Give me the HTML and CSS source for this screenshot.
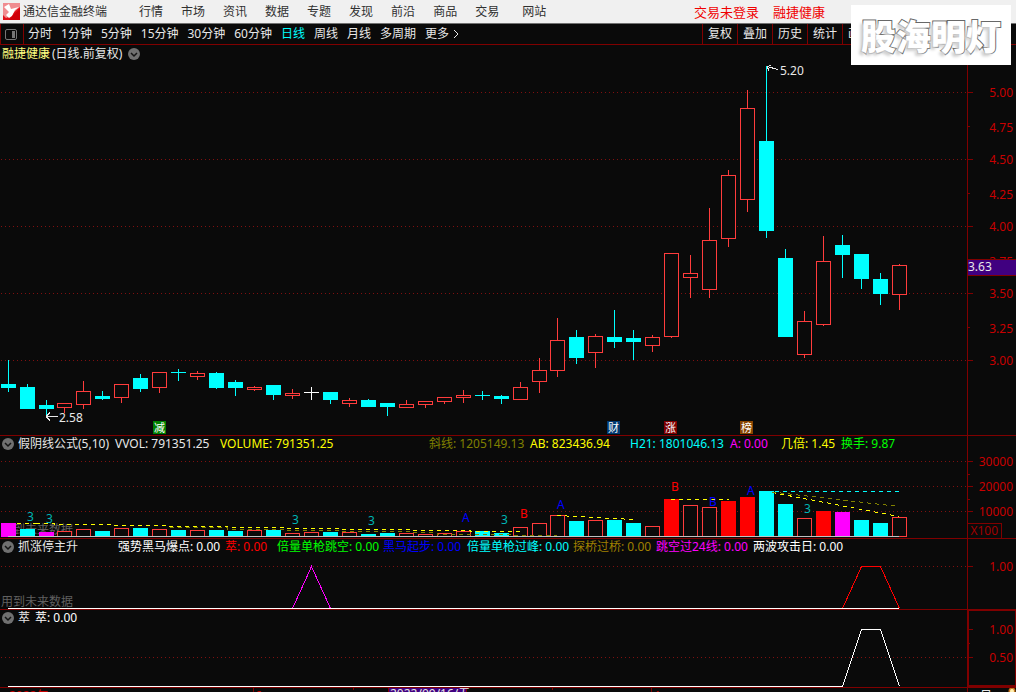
FILE: index.html
```
<!DOCTYPE html>
<html lang="zh-CN">
<head>
<meta charset="utf-8">
<title>通达信金融终端</title>
<link rel="stylesheet" href="styles.css">
</head>
<body>
<div class="app">
  <header class="topbar">
    <svg class="logo" width="17" height="17" viewBox="0 0 17 17" aria-hidden="true">
      <rect width="17" height="17" fill="#e01018"/>
      <path d="M0 0H17V4L11 9L8 13L3 15L0 12Z" fill="#f08c90"/>
      <path d="M1 4L6 1L8 6L16 4L12 7L9 13L6 15L3 12L6 9Z" fill="#fff"/>
      <path d="M11 11L17 6V17H6Z" fill="#d00008"/>
    </svg>
    <span class="brand">通达信金融终端</span>
    <nav class="menu">
      <a href="#">行情</a><a href="#">市场</a><a href="#">资讯</a><a href="#">数据</a><a href="#">专题</a><a href="#">发现</a><a href="#">前沿</a><a href="#">商品</a><a href="#">交易</a><a href="#" class="site">网站</a>
    </nav>
    <div class="account"><a href="#">交易未登录</a><a href="#">融捷健康</a></div>
  </header>

  <div class="toolbar">
    <button class="side-toggle" aria-label="侧栏">
      <svg width="13" height="11" viewBox="0 0 13 11"><rect x=".5" y=".5" width="11" height="10" rx="1.5" fill="none" stroke="#777"/><rect x="7" y="2" width="3" height="7" fill="#777"/></svg>
    </button>
    <div class="periods">
      <button>分时</button><button>1分钟</button><button>5分钟</button><button>15分钟</button><button>30分钟</button><button>60分钟</button><button class="active">日线</button><button>周线</button><button>月线</button><button>多周期</button><button class="more">更多<svg width="7" height="10" viewBox="0 0 7 10"><path d="M1 1L5 5L1 9" fill="none" stroke="#e8e8e8"/></svg></button>
    </div>
    <div class="tools"><button>复权</button><button>叠加</button><button>历史</button><button>统计</button><button>画线</button></div>
  </div>
  <div class="watermark">股海明灯</div>

  <section class="panel">
    <div class="plot">
      <div class="caption">
        <span class="stock">融捷健康</span><span>(日线.前复权)</span>
        <button class="fold" aria-label="菜单"><svg width="12" height="12" viewBox="0 0 12 12"><circle cx="6" cy="6" r="6" fill="#707070"/><path d="M3 5L6 8L9 5" fill="none" stroke="#141414" stroke-width="1.5"/></svg></button>
      </div>
      <svg class="chart" height="372"><g transform="translate(0,-63)">
        <g class="grid"><path d="M1 92.5H2000M1 159.5H2000M1 226.5H2000M1 293.5H2000M1 360.5H2000"/></g>
        <g id="candles"></g>
        <path class="pointer" d="M767 66.5L778 69.5M767 66.5L771 65.5M767 66.5L769 70.5M46 416.5H58M46 416.5L50 412.5M46 416.5L50 420.5"/>
        <text class="mark" x="780" y="75">5.20</text>
        <text class="mark" x="59" y="422">2.58</text>
        <g class="flags">
          <rect x="153" y="421" width="13" height="13" fill="#008000"/><text x="154" y="432">减</text>
          <rect x="607" y="421" width="13" height="13" fill="#003870"/><text x="608" y="432">财</text>
          <rect x="664" y="421" width="13" height="13" fill="#800000"/><text x="665" y="432">涨</text>
          <rect x="740" y="421" width="13" height="13" fill="#884400"/><text x="741" y="432">榜</text>
        </g>
      </g></svg>
    </div>
    <svg class="axis" height="390"><g transform="translate(0,-45)">
      <path class="tick" d="M0 92.5H5M0 126.5H2M0 159.5H5M0 193.5H2M0 226.5H5M0 260.5H2M0 293.5H5M0 327.5H2M0 360.5H5"/>
      <g class="scale"><text x="45" y="97">5.00</text><text x="45" y="132">4.75</text><text x="45" y="164">4.50</text><text x="45" y="199">4.25</text><text x="45" y="231">4.00</text><text x="45" y="266">3.75</text><text x="45" y="298">3.50</text><text x="45" y="333">3.25</text><text x="45" y="365">3.00</text></g>
      <rect x="0" y="259" width="100%" height="17" fill="#800000"/><rect x="0" y="260" width="100%" height="15" fill="#400080"/>
      <text class="mark" x="0" y="271">3.63</text>
    </g></svg>
  </section>

  <section class="panel ruled">
    <div class="plot">
      <div class="legend">
        <button class="fold" aria-label="菜单"><svg width="12" height="12" viewBox="0 0 12 12"><circle cx="6" cy="6" r="6" fill="#707070"/><path d="M3 5L6 8L9 5" fill="none" stroke="#141414" stroke-width="1.5"/></svg></button>
        <div class="values volume-values">
          <span>假阴线公式(5,10)</span><span>VVOL: 791351.25</span><span class="yellow">VOLUME: 791351.25</span><span class="olive">斜线: 1205149.13</span><span class="yellow">AB: 823436.94</span><span class="cyan">H21: 1801046.13</span><span class="magenta">A: 0.00</span><span class="yellow">几倍: 1.45</span><span class="lime">换手: 9.87</span>
        </div>
      </div>
      <svg class="chart" height="86"><g transform="translate(0,-452)">
        <g class="grid"><path d="M1 461.5H2000M1 486.5H2000M1 511.5H2000"/></g>
        <text class="notice" x="1" y="534">用到未来数据</text>
        <g id="volumes"></g>
        <g class="dash">
          <path stroke="#ffff00" d="M17 523.5H36M36 523.5H54V524.5H112V525.5H168V526.5H227V527.5H284V528.5H340V529.5H412V530.5H470V531.5H520M557 515.5L576 516.5L633 519.5M671 499.5H729M772 492.5L899 516.5"/>
          <path stroke="#808000" d="M170 527.5H227V529.5H284V530.5H340V531.5H412V532.5H437V534.5H512V535.5H557M772 492L899 506.5"/>
          <path stroke="#00ffff" d="M775 491.5H899"/>
        </g>
        <path stroke="#c0c0c0" d="M8 536.5H899"/>
        <g class="signals">
          <g fill="#00b4b4"><text x="27" y="521">3</text><text x="46" y="523">3</text><text x="292" y="524">3</text><text x="368" y="525">3</text><text x="501" y="524">3</text><text x="804" y="513">3</text></g>
          <g fill="#0000ff"><text x="462" y="522">A</text><text x="557" y="509">A</text><text x="709" y="506">B</text><text x="747" y="495">A</text></g>
          <g fill="#ff0000"><text x="520" y="518">B</text><text x="671" y="491">B</text></g>
        </g>
      </g></svg>
    </div>
    <svg class="axis" height="102"><g transform="translate(0,-436)">
      <path class="tick" d="M0 461.5H5M0 474.5H2M0 486.5H5M0 499.5H2M0 511.5H5M0 523.5H33M33.5 523V538"/>
      <g class="scale"><text x="45" y="466">30000</text><text x="45" y="491">20000</text><text x="45" y="516">10000</text><text class="unit" x="30" y="535">X100</text></g>
    </g></svg>
  </section>

  <section class="panel ruled">
    <div class="plot">
      <div class="legend">
        <button class="fold" aria-label="菜单"><svg width="12" height="12" viewBox="0 0 12 12"><circle cx="6" cy="6" r="6" fill="#707070"/><path d="M3 5L6 8L9 5" fill="none" stroke="#141414" stroke-width="1.5"/></svg></button>
        <div class="values signal-values">
          <span>抓涨停主升</span><span class="white">强势黑马爆点: 0.00</span><span class="red">萃: 0.00</span><span class="lime">倍量单枪跳空: 0.00</span><span class="blue">黑马起步: 0.00</span><span class="cyan">倍量单枪过峰: 0.00</span><span class="gold">探桥过桥: 0.00</span><span class="magenta">跳空过24线: 0.00</span><span class="white">两波攻击日: 0.00</span>
        </div>
      </div>
      <svg class="chart" height="54"><g transform="translate(0,-555)">
        <g class="grid"><path d="M1 566.5H2000"/></g>
        <text class="notice" x="1" y="606">用到未来数据</text>
        <path stroke="#ff00ff" d="M292.5 608.5L311.5 566.5L330.5 608.5"/>
        <path stroke="#ff0000" d="M842.5 608.5L861.5 566.5H880.5L899.5 608.5"/>
        <path stroke="#ffffff" d="M8 608.5H899"/>
      </g></svg>
    </div>
    <svg class="axis" height="70"><g transform="translate(0,-539)">
      <path class="tick" d="M0 566.5H5"/>
      <g class="scale"><text x="45" y="571">1.00</text></g>
    </g></svg>
  </section>

  <section class="panel ruled">
    <div class="plot">
      <div class="legend">
        <button class="fold" aria-label="菜单"><svg width="12" height="12" viewBox="0 0 12 12"><circle cx="6" cy="6" r="6" fill="#707070"/><path d="M3 5L6 8L9 5" fill="none" stroke="#141414" stroke-width="1.5"/></svg></button>
        <div class="values single-values"><span>萃</span><span class="white">萃: 0.00</span></div>
      </div>
      <svg class="chart" height="61"><g transform="translate(0,-626)">
        <g class="grid"><path d="M1 657.5H2000"/></g>
        <path stroke="#ffffff" d="M8 686.5H842.5L861.5 629.5H880.5L899.5 686.5"/>
      </g></svg>
    </div>
    <svg class="axis selected" height="77"><g transform="translate(0,-611)">
      <path class="tick" d="M0 629.5H4M0 643.5H1M0 657.5H4"/>
      <g class="scale"><text x="44" y="634">1.00</text><text x="44" y="662">0.50</text></g>
    </g></svg>
  </section>

  <footer class="timeline ruled">
    <svg class="dates" height="16">
      <path class="tick" d="M253.5 0V16M353.5 0V2M552.5 0V2M651.5 0V16"/>
      <rect x="388" y="0" width="79" height="16" fill="#800000"/><rect x="389" y="0" width="77" height="16" fill="#400080"/>
      <g class="months"><text x="9" y="12">2022年</text><text x="255" y="12">6</text><text x="654" y="12">1</text></g>
      <text class="mark" x="390" y="10">2022/09/16/五</text>
    </svg>
    <div class="cycle"><span>日线</span><svg width="8" height="8" viewBox="0 0 8 8"><circle cx="4" cy="3" r="3.5" fill="#c87820"/><circle cx="4" cy="3" r="2" fill="#fff0b0"/></svg></div>
  </footer>
</div>
<script src="chart.js"></script>
</body>
</html>
```
FILE: styles.css
```
* { box-sizing: border-box; }

body {
  margin: 0;
  background: #0a0a0a;
  color: #e8e8e8;
  font: 12px/16px "Noto Sans", "Noto Sans CJK SC", sans-serif;
}

button {
  margin: 0;
  padding: 0;
  border: 0;
  background: none;
  color: inherit;
  font: inherit;
  white-space: nowrap;
}

a { color: inherit; text-decoration: none; }
svg { display: block; flex: none; }

.app {
  position: relative;
  display: flex;
  flex-direction: column;
  height: 100vh;
  overflow: hidden;
}

/* top menu */
.topbar {
  display: flex;
  flex: none;
  align-items: center;
  height: 24px;
  padding-left: 3px;
  border-bottom: 1px solid #707070;
  background: #f0f0f0;
  color: #303030;
  white-space: nowrap;
}
.brand { margin-left: 3px; }
.menu { display: flex; gap: 18px; margin-left: 32px; }
.site { margin-left: 5px; }
.account {
  display: flex;
  gap: 14px;
  margin-left: auto;
  padding-right: 191px;
  color: #f00000;
  font-size: 13px;
}

/* period toolbar */
.toolbar {
  display: flex;
  flex: none;
  height: 21px;
  border-bottom: 1px solid #800000;
}
.side-toggle {
  display: flex;
  align-items: center;
  width: 24px;
  padding-left: 4px;
  border: solid #800000;
  border-width: 0 1px;
}
.periods { display: flex; gap: 9px; margin-left: 4px; }
.periods .active { color: #00ffff; }
.periods .more { display: flex; align-items: center; gap: 4px; }
.tools { display: flex; margin-left: auto; padding-right: 139px; }
.tools button { width: 35px; border-left: 1px solid #800000; }

.watermark {
  position: absolute;
  top: 5px;
  right: 5px;
  width: 160px;
  height: 60px;
  background: #fff;
  color: #fff;
  font: 900 35px/60px "Noto Sans CJK SC", sans-serif;
  text-align: center;
  text-shadow: -3px 3px 3px #d0d0d0;
  -webkit-text-stroke: 2px #686868;
  paint-order: stroke fill;
}

/* chart panels */
.panel { display: flex; flex: none; }
.ruled { border-top: 1px solid #800000; }
.plot { flex: 1; min-width: 0; }
.chart { width: 100%; fill: none; shape-rendering: crispEdges; }
.axis {
  width: 49px;
  border-left: 1px solid #800000;
  shape-rendering: crispEdges;
}
.selected { border: solid #800000; border-width: 1px 1px 2px 2px; }

.caption, .legend {
  display: flex;
  align-items: center;
  height: 16px;
  padding-left: 2px;
  white-space: nowrap;
}
.caption { height: 18px; gap: 2px; }
.caption .fold { margin-left: 4px; }
.stock { color: #ffff80; }
.values { display: grid; margin-left: 4px; }
.volume-values { grid-template-columns: 97px 105px 209px 101px 100px 100px 51px 60px auto; }
.signal-values { grid-template-columns: 100px 107px 52px 106px 84px 106px 83px 97px auto; }
.single-values { grid-template-columns: 17px auto; }

.white { color: #ffffff; }
.yellow { color: #ffff00; }
.olive { color: #808000; }
.cyan { color: #00ffff; }
.magenta { color: #ff00ff; }
.lime { color: #00ff00; }
.red { color: #ff0000; }
.blue { color: #0000ff; }
.gold { color: #a08000; }

.grid path { stroke: #801010; stroke-dasharray: 1 3; }
.tick { fill: none; stroke: #800000; }
.scale text { fill: #c80000; text-anchor: end; }
.scale .unit { fill: #a00000; }
.mark { fill: #e8e8e8; }
.pointer { stroke: #e8e8e8; }
.flags text { fill: #fff; font-size: 11px; }
.notice { fill: #606060; }
.dash path { stroke-dasharray: 4 4; }

/* candle and bar fills */
.down { fill: #00ffff; stroke: none; }
.up { fill: #0a0a0a; stroke: #ff3c3c; }
.flat { fill: #ffffff; stroke: none; }
.strong { fill: #ff0000; stroke: none; }
.alert { fill: #ff00ff; stroke: none; }
.wick-down { stroke: #00ffff; }
.wick-up { stroke: #ff3c3c; }
.wick-flat { stroke: #ffffff; }

/* date strip */
.timeline { display: flex; flex: none; }
.dates { flex: 1; min-width: 0; shape-rendering: crispEdges; }
.months text { fill: #c80000; }
.cycle {
  display: flex;
  width: 49px;
  padding-left: 12px;
  gap: 5px;
  border-left: 1px solid #800000;
}
```
FILE: chart.js
```
// Each day: left x, high, body top, body bottom, low, kind, volume top, volume kind
const days = [
  [1, 360, 384, 388, 392, "down", 523, "alert"],
  [20, 384, 387, 409, 409, "down", 529, "down"],
  [39, 400, 405, 409, 417, "down", 532, "alert"],
  [57, 403, 403, 408, 413, "up", 531, "up"],
  [76, 381, 391, 405, 409, "up", 529, "up"],
  [95, 391, 396, 399, 400, "down", 531, "down"],
  [114, 384, 384, 398, 403, "up", 528, "up"],
  [133, 374, 378, 389, 392, "down", 528, "down"],
  [152, 372, 372, 388, 393, "up", 529, "up"],
  [171, 369, 372, 373, 381, "down", 530, "down"],
  [190, 371, 373, 377, 380, "up", 530, "up"],
  [209, 372, 373, 388, 389, "down", 530, "down"],
  [228, 380, 382, 388, 396, "down", 531, "down"],
  [247, 386, 387, 390, 391, "up", 530, "up"],
  [266, 385, 385, 395, 400, "down", 530, "down"],
  [285, 389, 393, 396, 399, "up", 533, "up"],
  [304, 387, 392, 393, 400, "flat", 532, "up"],
  [323, 392, 392, 400, 404, "down", 532, "down"],
  [342, 398, 400, 404, 407, "up", 532, "up"],
  [361, 399, 400, 407, 407, "down", 534, "down"],
  [380, 403, 403, 407, 416, "down", 533, "down"],
  [399, 400, 404, 408, 408, "up", 533, "up"],
  [418, 401, 401, 405, 408, "up", 534, "up"],
  [437, 397, 397, 402, 404, "up", 533, "up"],
  [456, 390, 395, 398, 403, "up", 531, "up"],
  [475, 391, 395, 396, 400, "down", 531, "down"],
  [494, 395, 396, 399, 404, "down", 533, "down"],
  [513, 382, 387, 400, 400, "up", 527, "up"],
  [532, 358, 370, 382, 393, "up", 523, "up"],
  [550, 318, 340, 371, 377, "up", 515, "up"],
  [569, 330, 337, 358, 364, "down", 521, "down"],
  [588, 334, 336, 353, 368, "up", 520, "up"],
  [607, 310, 337, 342, 348, "down", 520, "down"],
  [626, 330, 338, 342, 360, "down", 523, "down"],
  [645, 335, 337, 346, 352, "up", 526, "up"],
  [664, 253, 253, 337, 338, "up", 499, "strong"],
  [683, 255, 273, 278, 298, "up", 505, "up"],
  [702, 208, 240, 290, 298, "up", 507, "up"],
  [721, 170, 175, 239, 247, "up", 501, "strong"],
  [740, 90, 108, 200, 212, "up", 497, "strong"],
  [759, 66, 141, 231, 238, "down", 491, "down"],
  [778, 249, 258, 337, 337, "down", 504, "down"],
  [797, 311, 321, 355, 358, "up", 518, "up"],
  [816, 236, 261, 325, 326, "up", 511, "strong"],
  [835, 235, 245, 255, 278, "down", 512, "alert"],
  [854, 254, 254, 279, 289, "down", 520, "down"],
  [873, 273, 279, 294, 305, "down", 523, "down"],
  [892, 264, 265, 295, 310, "up", 517, "up"]
];

const body = (x, top, bottom, kind) => kind === "up"
  ? `<rect class="up" x="${x + 0.5}" y="${top + 0.5}" width="14" height="${bottom - top - 1}"/>`
  : `<rect class="${kind}" x="${x}" y="${top}" width="15" height="${bottom - top}"/>`;

document.getElementById("candles").innerHTML = days.map(([x, high, top, bottom, low, kind]) =>
  `<path class="wick-${kind}" d="M${x + 7.5} ${high}V${low}"/>` + body(x, top, bottom, kind)).join("");

document.getElementById("volumes").innerHTML = days.map(d => body(d[0], d[6], 537, d[7])).join("");
```
